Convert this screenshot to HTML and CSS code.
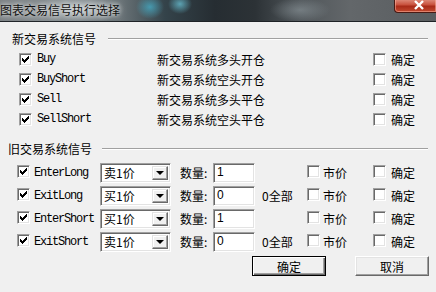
FILE: index.html
```html
<!DOCTYPE html>
<html>
<head>
<meta charset="utf-8">
<link rel="stylesheet" href="styles.css">
</head>
<body>
<div class="window">
  <div class="titlebar">
    <span class="title">图表交易信号执行选择</span>
    <div class="close"><svg width="12" height="10" viewBox="0 0 12 10"><path d="M2 1 L10 9 M10 1 L2 9" stroke="#fff" stroke-width="2.4" fill="none"/></svg></div>
  </div>
  <div class="client">
    <div class="legend l1"><span>新交易系统信号</span><i class="rule"></i></div>
    <div class="rows1">
      <div class="row1"><span class="cb on"></span><span class="code">Buy</span><span class="desc">新交易系统多头开仓</span><span class="cb"></span><span class="txt">确定</span></div>
      <div class="row1"><span class="cb on"></span><span class="code">BuyShort</span><span class="desc">新交易系统空头开仓</span><span class="cb"></span><span class="txt">确定</span></div>
      <div class="row1"><span class="cb on"></span><span class="code">Sell</span><span class="desc">新交易系统多头平仓</span><span class="cb"></span><span class="txt">确定</span></div>
      <div class="row1"><span class="cb on"></span><span class="code">SellShort</span><span class="desc">新交易系统空头平仓</span><span class="cb"></span><span class="txt">确定</span></div>
    </div>
    <div class="legend l2"><span>旧交易系统信号</span><i class="rule"></i></div>
    <div class="rows2">
      <div class="row2"><span class="cb on"></span><span class="code">EnterLong</span><span class="select"><span class="val">卖1价</span><span class="arrow"></span></span><span class="txt qty">数量:</span><span class="input">1</span><span class="txt all"></span><span class="cb"></span><span class="txt">市价</span><span class="cb"></span><span class="txt">确定</span></div>
      <div class="row2"><span class="cb on"></span><span class="code">ExitLong</span><span class="select"><span class="val">买1价</span><span class="arrow"></span></span><span class="txt qty">数量:</span><span class="input">0</span><span class="txt all">0全部</span><span class="cb"></span><span class="txt">市价</span><span class="cb"></span><span class="txt">确定</span></div>
      <div class="row2"><span class="cb on"></span><span class="code">EnterShort</span><span class="select"><span class="val">买1价</span><span class="arrow"></span></span><span class="txt qty">数量:</span><span class="input">1</span><span class="txt all"></span><span class="cb"></span><span class="txt">市价</span><span class="cb"></span><span class="txt">确定</span></div>
      <div class="row2"><span class="cb on"></span><span class="code">ExitShort</span><span class="select"><span class="val">卖1价</span><span class="arrow"></span></span><span class="txt qty">数量:</span><span class="input">0</span><span class="txt all">0全部</span><span class="cb"></span><span class="txt">市价</span><span class="cb"></span><span class="txt">确定</span></div>
    </div>
    <div class="buttons">
      <span class="btn default">确定</span>
      <span class="btn">取消</span>
    </div>
  </div>
</div>
</body>
</html>
```
FILE: styles.css
```css
* { box-sizing: border-box; }
html, body { margin: 0; padding: 0; }
body {
  width: 436px; height: 292px; overflow: hidden;
  background: #f0f0f0;
  font-family: "Noto Sans CJK SC", "Liberation Sans", sans-serif;
  font-size: 12px; color: #000;
}
.window { width: 436px; height: 292px; display: flex; flex-direction: column; }
.titlebar {
  height: 22px; flex: none;
  display: flex; align-items: flex-start; justify-content: space-between;
  border-bottom: 1px solid #1e2226;
  background:
    radial-gradient(ellipse 45px 14px at 80px 9px, rgba(205,212,215,.75), rgba(205,212,215,0)),
    radial-gradient(ellipse 14px 12px at 150px 7px, rgba(70,170,195,.8), rgba(70,170,195,0)),
    radial-gradient(ellipse 12px 10px at 180px 4px, rgba(110,205,225,.7), rgba(110,205,225,0)),
    radial-gradient(ellipse 30px 12px at 300px 10px, rgba(140,150,155,.6), rgba(140,150,155,0)),
    linear-gradient(90deg, #7a8083 0, #858c8f 50px, #6a7377 120px, #34434a 165px, #262d32 215px, #2c3236 255px, #50565a 300px, #63676a 350px, #595d60 436px);
}
.title {
  line-height: 20px; padding-left: 0; color: #111;
  text-shadow: 0 0 4px rgba(255,255,255,.9), 0 0 8px rgba(255,255,255,.6);
}
.close {
  width: 42px; height: 14px; margin-top: -1px;
  border: 1px solid #4a1a14; border-top: none; border-right: none;
  border-bottom-left-radius: 4px;
  background: linear-gradient(#e09080 0, #c8503c 45%, #a82a18 55%, #c24a30 100%);
  display: flex; align-items: center; justify-content: center;
  box-shadow: inset 0 0 0 1px rgba(255,190,170,.5);
}
.close svg { margin-left: 6px; margin-top: -1px; }
.client { display: flex; flex-direction: column; }
.legend { display: flex; align-items: center; height: 14px; }
.legend span { line-height: 14px; }
.legend .rule { flex: 1; height: 2px; border-top: 1px solid #a0a0a0; border-bottom: 1px solid #fff; margin-right: 8px; }
.l1 { margin-top: 10px; padding-left: 12px; }
.l1 .rule { margin-left: 12px; }
.l2 { margin-top: 13px; padding-left: 8px; }
.l2 .rule { margin-left: 10px; }
.cb {
  width: 13px; height: 13px; flex: none; display: inline-block; position: relative;
  background: #fff;
  border: 1px solid; border-color: #a0a0a0 #fff #fff #a0a0a0;
  box-shadow: inset 1px 1px 0 #696969, inset -1px -1px 0 #e3e3e3;
}
.cb.on::after {
  content: ""; position: absolute; left: 2px; top: 2px; width: 7px; height: 7px;
  background: url("data:image/svg+xml;utf8,<svg xmlns='http://www.w3.org/2000/svg' width='7' height='7'><path d='M0 2h1v1h1v1h1v-1h1v-1h1v-1h1v-1h1v3h-1v1h-1v1h-1v1h-1v1h-1v-1h-1v-1h-1v-1h-1z' fill='black'/></svg>") no-repeat;
}
.code {
  font-family: "Liberation Mono", "DejaVu Sans Mono", monospace;
  font-size: 12px; letter-spacing: -1.2px;
}
.rows1 { display: flex; flex-direction: column; margin-top: 3px; }
.row1 {
  height: 20px; display: grid; align-items: center;
  grid-template-columns: 19px 13px 5px 120px 216px 13px 5px auto;
}
.row1 .cb.on { grid-column: 2; }
.row1 .code { grid-column: 4; }
.row1 .desc { grid-column: 5; }
.row1 .cb:not(.on) { grid-column: 6; }
.row1 .txt { grid-column: 8; }
.rows2 { display: flex; flex-direction: column; margin-top: 5px; }
.row2 {
  height: 23px; display: grid; align-items: center;
  grid-template-columns: 17px 13px 4px 66px 71px 9px 33px 42px 7px 45px 13px 3px 50px 13px 5px auto;
}
.row2 > :nth-child(1) { grid-column: 2; }
.row2 > :nth-child(2) { grid-column: 4; }
.row2 > :nth-child(3) { grid-column: 5; }
.row2 > :nth-child(4) { grid-column: 7; }
.row2 > :nth-child(5) { grid-column: 8; }
.row2 > :nth-child(6) { grid-column: 10; }
.row2 > :nth-child(7) { grid-column: 11; }
.row2 > :nth-child(8) { grid-column: 13; }
.row2 > :nth-child(9) { grid-column: 14; }
.row2 > :nth-child(10) { grid-column: 16; }
.row2 .cb { margin-top: -2px; }
.select {
  height: 20px; display: flex; align-items: center; justify-content: space-between;
  background: #fff;
  border: 1px solid; border-color: #a0a0a0 #fff #fff #a0a0a0;
  box-shadow: inset 1px 1px 0 #696969, inset -1px -1px 0 #e3e3e3;
  padding: 2px 2px 2px 3px;
}
.select .val { font-size: 12px; line-height: 14px; }
.arrow {
  width: 16px; height: 14px; position: relative;
  background: #f0f0f0;
  border: 1px solid; border-color: #e3e3e3 #696969 #696969 #e3e3e3;
  box-shadow: inset -1px -1px 0 #a0a0a0, inset 1px 1px 0 #fff;
}
.arrow::after {
  content: ""; position: absolute; left: 3px; top: 4px;
  border-left: 4px solid transparent; border-right: 4px solid transparent; border-top: 4px solid #000;
}
.input {
  height: 20px; background: #fff; padding: 0 3px; line-height: 17px;
  border: 1px solid; border-color: #a0a0a0 #fff #fff #a0a0a0;
  box-shadow: inset 1px 1px 0 #696969, inset -1px -1px 0 #e3e3e3;
  font-family: "Liberation Sans", sans-serif; font-size: 12px;
}
.all { font-size: 12px; }
.buttons { display: flex; gap: 29px; padding-left: 252px; margin-top: 3px; }
.btn {
  width: 74px; height: 20px; display: flex; align-items: center; justify-content: center;
  background: #f0f0f0;
  border: 1px solid; border-color: #fff #696969 #696969 #fff;
  box-shadow: inset -1px -1px 0 #a0a0a0, inset 1px 1px 0 #e3e3e3;
  font-size: 12px;
}
.btn.default {
  border: 1px solid #000;
  box-shadow: inset 1px 1px 0 #fff, inset -1px -1px 0 #696969, inset -2px -2px 0 #a0a0a0;
}
```
